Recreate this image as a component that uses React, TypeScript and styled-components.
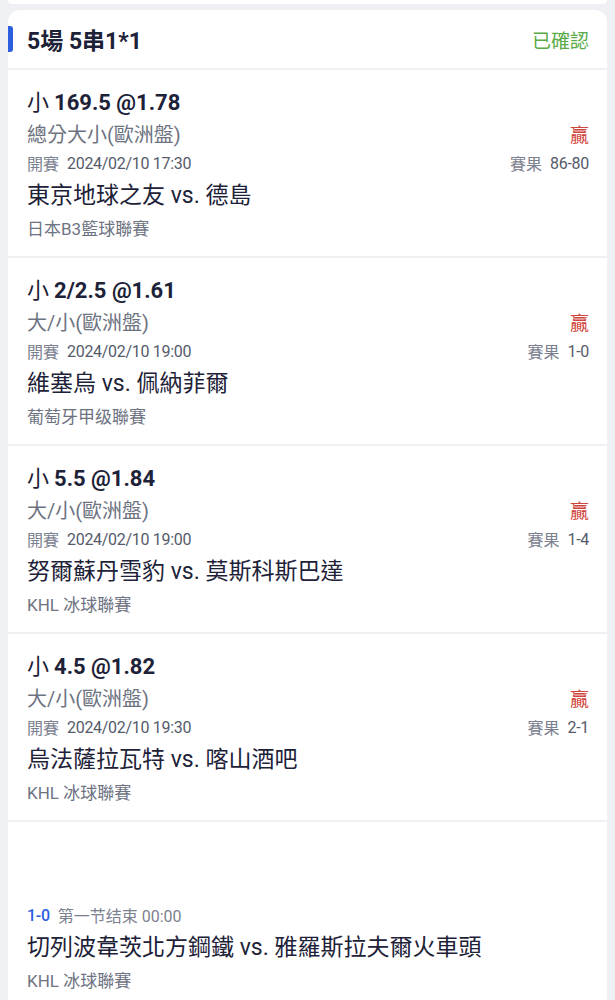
import styled, { createGlobalStyle } from "styled-components";

const GlobalStyle = createGlobalStyle`
  html, body {
    margin: 0;
    padding: 0;
    background: #eef0f4;
  }
  body {
    font-family: Roboto, "Noto Sans CJK TC", sans-serif;
    color: #1d2238;
  }
`;

const Page = styled.div`
  width: 615px;
  height: 1000px;
  overflow: hidden;
  background: #eef0f4;
  display: flex;
  flex-direction: column;
  gap: 6px;
`;

const PrevCard = styled.div`
  flex-shrink: 0;
  height: 4px;
  margin: 0 8px;
  background: #fff;
  border-radius: 0 0 12px 12px;
`;

const Card = styled.div`
  flex-shrink: 0;
  margin: 0 8px;
  background: #eef0f4;
  border-radius: 12px 12px 0 0;
  display: flex;
  flex-direction: column;
  gap: 2px;
  overflow: hidden;
`;

const Header = styled.div`
  flex-shrink: 0;
  height: 58px;
  background: #fff;
  display: flex;
  align-items: center;
  justify-content: space-between;
  padding-right: 18px;
`;

const HeaderTitle = styled.div`
  display: flex;
  align-items: center;
  gap: 14px;
  font-size: 23px;
  font-weight: 700;
  color: #1d2238;
`;

const Marker = styled.span`
  width: 5px;
  height: 26px;
  background: #2c5fe0;
  border-radius: 0 3px 3px 0;
`;

const Status = styled.div`
  font-size: 19px;
  color: #5aab47;
`;

const Section = styled.div`
  flex-shrink: 0;
  background: #fff;
  height: 186px;
  box-sizing: border-box;
  padding: 18px 18px 12px 19px;
  display: flex;
  flex-direction: column;
`;

const BetLine = styled.div`
  height: 30px;
  line-height: 30px;
  font-size: 22px;
  font-weight: 700;
  color: #1d2238;
  white-space: nowrap;
`;

const Side = styled.span`
  font-weight: 400;
  margin-right: 5px;
`;

const Row = styled.div`
  height: 30px;
  display: flex;
  align-items: center;
  justify-content: space-between;
`;

const Market = styled.div`
  font-size: 20px;
  color: #6e7382;
`;

const Win = styled.div`
  font-size: 19px;
  color: #d0453b;
  align-self: flex-end;
  line-height: 24px;
`;

const Meta = styled.div`
  display: flex;
  align-items: center;
  gap: 8px;
  font-size: 16px;
  color: #7c8190;
`;

const MetaValue = styled.span<{ $tone?: "blue" }>`
  color: ${(p) => (p.$tone === "blue" ? "#2c5fe0" : "#555b6b")};
  font-weight: ${(p) => (p.$tone === "blue" ? 500 : 400)};
  letter-spacing: -0.3px;
`;

const Teams = styled.div`
  height: 36px;
  line-height: 36px;
  font-size: 23px;
  color: #1d2238;
  white-space: nowrap;
`;

const League = styled.div`
  height: 30px;
  line-height: 30px;
  font-size: 17px;
  color: #6e7382;
`;

const Hidden = styled.div`
  height: 30px;
`;

type Bet = {
  side: string;
  pick: string;
  market: string;
  time: string;
  teams: string;
  league: string;
  score: string;
};

const bets: Bet[] = [
  {
    side: "小",
    pick: "169.5 @1.78",
    market: "總分大小(歐洲盤)",
    time: "2024/02/10 17:30",
    teams: "東京地球之友 vs. 德島",
    league: "日本B3籃球聯賽",
    score: "86-80",
  },
  {
    side: "小",
    pick: "2/2.5 @1.61",
    market: "大/小(歐洲盤)",
    time: "2024/02/10 19:00",
    teams: "維塞烏 vs. 佩納菲爾",
    league: "葡萄牙甲级聯賽",
    score: "1-0",
  },
  {
    side: "小",
    pick: "5.5 @1.84",
    market: "大/小(歐洲盤)",
    time: "2024/02/10 19:00",
    teams: "努爾蘇丹雪豹 vs. 莫斯科斯巴達",
    league: "KHL 冰球聯賽",
    score: "1-4",
  },
  {
    side: "小",
    pick: "4.5 @1.82",
    market: "大/小(歐洲盤)",
    time: "2024/02/10 19:30",
    teams: "烏法薩拉瓦特 vs. 喀山酒吧",
    league: "KHL 冰球聯賽",
    score: "2-1",
  },
];

const BetSection = ({ bet }: { bet: Bet }) => (
  <Section>
    <BetLine>
      <Side>{bet.side}</Side>
      {bet.pick}
    </BetLine>
    <Row>
      <Market>{bet.market}</Market>
      <Win>贏</Win>
    </Row>
    <Row>
      <Meta>
        開賽 <MetaValue>{bet.time}</MetaValue>
      </Meta>
      <Meta>
        賽果 <MetaValue>{bet.score}</MetaValue>
      </Meta>
    </Row>
    <Teams>{bet.teams}</Teams>
    <League>{bet.league}</League>
  </Section>
);

export default function App() {
  return (
    <>
      <GlobalStyle />
      <Page>
        <PrevCard />
        <Card>
          <Header>
            <HeaderTitle>
              <Marker />
              5場 5串1*1
            </HeaderTitle>
            <Status>已確認</Status>
          </Header>
          {bets.map((b, i) => (
            <BetSection key={i} bet={b} />
          ))}
          <Section>
            <Hidden />
            <Hidden />
            <Row>
              <Meta>
                <MetaValue $tone="blue">1-0</MetaValue>
                第一节结束 00:00
              </Meta>
            </Row>
            <Teams>切列波韋茨北方鋼鐵 vs. 雅羅斯拉夫爾火車頭</Teams>
            <League>KHL 冰球聯賽</League>
          </Section>
        </Card>
      </Page>
    </>
  );
}
